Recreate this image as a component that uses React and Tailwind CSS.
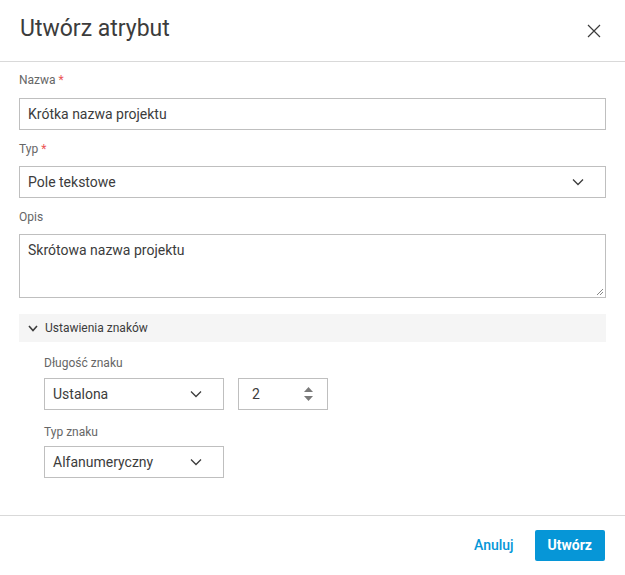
import React from "react";

const font = { fontFamily: 'Roboto, "Noto Sans", sans-serif' };

function Chevron({ className = "" }) {
  return (
    <svg className={className} width="12" height="8" viewBox="0 0 12 8" fill="none">
      <path d="M1 1.5L6 6.5L11 1.5" stroke="#3c3c3c" strokeWidth="1.3" />
    </svg>
  );
}

function Label({ children, required }) {
  return (
    <div className="h-4 text-[12px] leading-4 text-[#666666]">
      {children}
      {required && <span className="text-[#eb5555]"> *</span>}
    </div>
  );
}

function Select({ value, className = "" }) {
  return (
    <div className={`h-8 border border-[#bfbfbf] flex items-center justify-between pl-[8px] pr-[21px] text-[14px] text-[#3c3c3c] ${className}`}>
      <span>{value}</span>
      <Chevron />
    </div>
  );
}

export default function App() {
  return (
    <div className="w-[625px] h-[575px] bg-white flex flex-col text-[#3c3c3c]" style={font}>
      <div className="h-[62px] shrink-0 flex items-center justify-between pl-5 pr-6 border-b border-[#d9d9d9]">
        <h1 className="text-[23px] text-[#3c3c3c] -mt-[2px]">Utwórz atrybut</h1>
        <svg width="14" height="14" viewBox="0 0 14 14" fill="none">
          <path d="M1 1L13 13M13 1L1 13" stroke="#3c3c3c" strokeWidth="1.2" />
        </svg>
      </div>

      <div className="flex-1 px-[19px] pt-[10px]">
        <Label required>Nazwa</Label>
        <div className="mt-[10px] h-8 border border-[#bfbfbf] flex items-center px-[8px] text-[14px]">
          Krótka nazwa projektu
        </div>

        <div className="mt-[11px]">
          <Label required>Typ</Label>
        </div>
        <Select value="Pole tekstowe" className="mt-[9px]" />

        <div className="mt-[11px]">
          <Label>Opis</Label>
        </div>
        <div className="relative mt-[9px] h-16 border border-[#bfbfbf] px-[8px] pt-[5px] text-[14px]">
          Skrótowa nazwa projektu
          <svg className="absolute right-[1px] bottom-[1px]" width="8" height="8" viewBox="0 0 8 8" fill="none">
            <path d="M7 1L1 7M7 4L4 7" stroke="#888" strokeWidth="1" />
          </svg>
        </div>

        <div className="mt-4 h-7 bg-[#f5f5f5] flex items-center pl-[9px] gap-[7px] text-[12px] text-[#3c3c3c]">
          <svg width="10" height="7" viewBox="0 0 10 7" fill="none">
            <path d="M1 1L5 5.5L9 1" stroke="#3c3c3c" strokeWidth="1.6" />
          </svg>
          <span>Ustawienia znaków</span>
        </div>

        <div className="pl-[25px]">
          <div className="mt-[13px]">
            <Label>Długość znaku</Label>
          </div>
          <div className="mt-[7px] flex gap-[14px]">
            <Select value="Ustalona" className="w-[180px]" />
            <div className="w-[90px] h-8 border border-[#bfbfbf] flex items-center justify-between pl-[13px] pr-[14px] text-[14px]">
              <span>2</span>
              <div className="flex flex-col gap-[4px]">
                <svg width="9" height="5" viewBox="0 0 9 5"><path d="M4.5 0L9 5H0Z" fill="#7a7a7a" /></svg>
                <svg width="9" height="5" viewBox="0 0 9 5"><path d="M0 0H9L4.5 5Z" fill="#7a7a7a" /></svg>
              </div>
            </div>
          </div>

          <div className="mt-[14px]">
            <Label>Typ znaku</Label>
          </div>
          <Select value="Alfanumeryczny" className="mt-[6px] w-[180px]" />
        </div>
      </div>

      <div className="h-[60px] shrink-0 border-t border-[#d9d9d9] flex items-center justify-end gap-[21px] pr-5">
        <span className="text-[14px] font-medium text-[#0696d7]">Anuluj</span>
        <button className="h-[31px] px-[13px] bg-[#0696d7] rounded-[2px] text-white text-[14px] font-bold">
          Utwórz
        </button>
      </div>
    </div>
  );
}
